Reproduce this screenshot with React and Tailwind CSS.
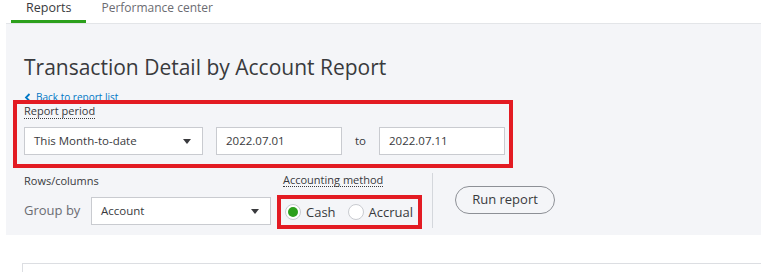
import React from "react";

const font = { fontFamily: '"Open Sans", "Liberation Sans", sans-serif' };

function Caret() {
  return (
    <svg width="8" height="5" viewBox="0 0 8 5" className="shrink-0">
      <path d="M0 0 L8 0 L4 5 Z" fill="#393a3d" />
    </svg>
  );
}

function Radio({ checked, label }) {
  return (
    <div className="flex items-center gap-[5px]">
      <div className="w-[16px] h-[16px] rounded-full bg-white border border-[#c9cbd0] flex items-center justify-center">
        {checked && <div className="w-[10px] h-[10px] rounded-full bg-[#2ca01c]" />}
      </div>
      <span className="text-[13px] leading-[16px] text-[#393a3d]">{label}</span>
    </div>
  );
}

export default function App() {
  return (
    <div className="w-[783px] h-[272px] bg-white overflow-hidden" style={font}>
      {/* Tabs */}
      <div className="flex pl-[11px] h-[23px]">
        <div className="px-[15px] border-b-[3px] border-[#2ca01c] text-[12.5px] leading-[16px] text-[#393a3d]">
          Reports
        </div>
        <div className="px-[15px] text-[12px] leading-[16px] text-[#6b6c72]">
          Performance center
        </div>
      </div>

      {/* Gray panel */}
      <div className="ml-[6px] w-[755px] h-[212px] bg-[#f4f5f8] border-t border-[#e3e5e8] pl-[7px]">
        <h1 className="pl-[11px] pt-[29px] text-[21px] leading-[28px] text-[#393a3d] font-normal">
          Transaction Detail by Account Report
        </h1>
        <div className="pl-[11px] mt-[10px] flex items-center gap-[5px] h-[12px] text-[10px] leading-[12px] text-[#0077c5]">
          <svg width="7" height="9" viewBox="0 0 7 9">
            <path d="M5.5 1 L2 4.5 L5.5 8" stroke="#0077c5" strokeWidth="1.8" fill="none" />
          </svg>
          <span>Back to report list</span>
        </div>

        {/* Report period annotated box */}
        <div className="relative z-10 mt-[-3px] w-[500px] h-[68px] border-[4px] border-[#e31b23] pl-[7px]">
          <div className="w-fit text-[11px] leading-[14px] text-[#393a3d] border-b border-dotted border-[#393a3d]">
            Report period
          </div>
          <div className="flex items-center mt-[8px]">
            <div className="w-[179px] h-[28px] bg-white border border-[#c9cbd0] flex items-center justify-between pl-[9px] pr-[11px] text-[11.5px] text-[#393a3d]">
              <span>This Month-to-date</span>
              <Caret />
            </div>
            <div className="ml-[13px] w-[126px] h-[28px] bg-white border border-[#c9cbd0] flex items-center pl-[9px] text-[11.5px] text-[#393a3d]">
              2022.07.01
            </div>
            <div className="w-[37px] text-center text-[11.5px] text-[#393a3d]">to</div>
            <div className="w-[126px] h-[28px] bg-white border border-[#c9cbd0] flex items-center pl-[9px] text-[11.5px] text-[#393a3d]">
              2022.07.11
            </div>
          </div>
        </div>

        {/* Second row */}
        <div className="flex">
          <div className="pl-[11px] pt-[6px]">
            <div className="text-[11px] leading-[14px] text-[#393a3d]">Rows/columns</div>
            <div className="flex items-center mt-[9px]">
              <span className="text-[13px] text-[#6b6c72] w-[67px]">Group by</span>
              <div className="w-[180px] h-[28px] bg-white border border-[#c9cbd0] flex items-center justify-between pl-[9px] pr-[11px] text-[11.5px] text-[#393a3d]">
                <span>Account</span>
                <Caret />
              </div>
            </div>
          </div>

          <div className="ml-[6px] pt-[5px]">
            <div className="ml-[6px] w-fit text-[11px] leading-[13px] text-[#393a3d] border-b border-dotted border-[#393a3d]">
              Accounting method
            </div>
            <div className="mt-[8px] w-[145px] h-[34px] border-[4px] border-[#e31b23] flex items-center gap-[12px] pl-[4px]">
              <Radio checked label="Cash" />
              <Radio label="Accrual" />
            </div>
          </div>

          <div className="ml-[10px] mt-[5px] h-[55px] border-l border-[#d4d7dc]" />

          <div className="ml-[22px] pt-[18px]">
            <button className="w-[100px] h-[28px] rounded-full border border-[#8d9096] text-[13px] font-medium text-[#393a3d] bg-transparent">
              Run report
            </button>
          </div>
        </div>
      </div>

      {/* Bottom content box */}
      <div className="ml-[22px] mt-[28px] w-[739px] h-[20px] border-t border-l border-[#dcdee2]" />
    </div>
  );
}
